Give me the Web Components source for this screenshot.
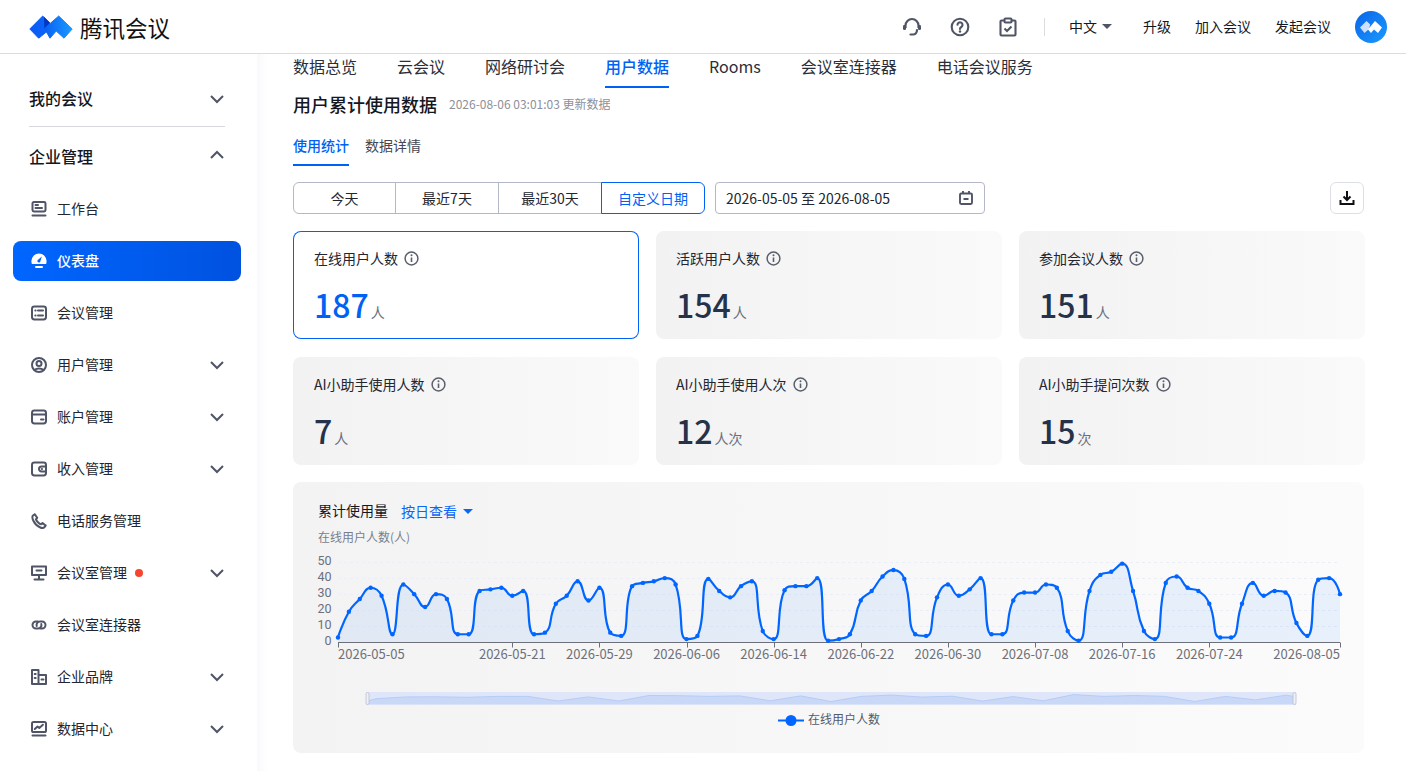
<!DOCTYPE html>
<html lang="zh-CN"><head><meta charset="utf-8"><title>腾讯会议</title>
<style>
html,body{margin:0;height:771px;overflow:hidden;background:#fff}
body{font-family:"Noto Sans CJK SC","Noto Sans",sans-serif;color:#15171f;font-size:14px}
app-shell{display:block}
</style></head><body>
<app-shell></app-shell>
<script>
const FONT='"Noto Sans CJK SC","Noto Sans",sans-serif';
const CH=`<svg width="16" height="16" viewBox="0 0 16 16" fill="none" stroke="#4f5566" stroke-width="2"><path d="M2 5l6 6 6-6"/></svg>`;
const S=(b,w=16)=>`<svg width="${w}" height="${w}" viewBox="0 0 16 16" fill="none" stroke="currentColor" stroke-width="2" stroke-linecap="round" stroke-linejoin="round">${b}</svg>`;
const ICONS={
desk:S(`<rect x="1.500" y="1" width="13" height="9.500" rx="1.400"/><path d="M4.500 4h2.500M4.500 7h6.500M1.500 14.500h13"/>`),
gauge:`<svg width="16" height="16" viewBox="0 0 16 16"><path fill="#fff" fill-rule="evenodd" d="M8 0.500a7.600 7.600 0 0 1 7.600 7.600c0 1-.2 2-.5 2.900H.9A7.600 7.600 0 0 1 .4 8.100 7.600 7.600 0 0 1 8 .5zM10.800 3.400L7.400 6.600a1.500 1.500 0 1 0 1.900 1.800z"/><rect fill="#fff" x="4" y="13" width="8" height="2" rx="1"/></svg>`,
list:S(`<rect x="1" y="1.500" width="14" height="13" rx="2.400"/><path d="M4.300 5.500h.3M7 5.500h5M4.300 10.500h.3M7 10.500h5"/>`),
user:S(`<circle cx="8" cy="8" r="7"/><circle cx="8" cy="6.400" r="2.500"/><path d="M3.800 12.700c1-1 2.400-1.300 4.200-1.300s3.200.3 4.200 1.300"/>`),
card:S(`<rect x="1" y="1.500" width="14" height="13" rx="2.400"/><path d="M1.500 5.500h13M10 10.500h2.500"/>`),
wallet:S(`<rect x="1" y="1.500" width="14" height="13" rx="2.400"/><path d="M15 5.500h-4.500a2.500 2.500 0 0 0 0 5H15"/><path d="M10.800 8h.2"/>`),
phone:S(`<path d="M3.800 1.200 2 2.500C1 3.400 1.300 5.500 2.500 8c1.300 2.600 4 5.400 6.800 6.500 1.700.7 3.200.6 4-.2l1.400-1.700-3.200-2.600-1.600 1.200C8.600 11.300 5.600 8.300 4.900 6.400l1.300-1.600z"/>`),
room:S(`<path d="M1 1.500h14v8.500H1zM8 10v3.500M3.500 14.500h9M5.500 5.500h5"/>`),
link:S(`<path d="M6.800 4.500H5a3.500 3.500 0 0 0 0 7h2a3.500 3.500 0 0 0 3.300-4.500"/><path d="M9.200 11.500H11a3.500 3.500 0 0 0 0-7H9a3.500 3.500 0 0 0-3.300 4.500"/>`),
brand:S(`<path d="M1 1h6.500v14H1zM7.500 6H15v9H7.500zM3.700 5h1M3.700 9h1M10.500 10.500h2"/>`),
data:S(`<rect x="1" y="1" width="14" height="10" rx="1.600"/><path d="M3.800 8l2.700-2.400 1.800 1.300 3.600-3.200M1.500 14.500h13"/>`)
};
function def(name,html,setup){customElements.define(name,class extends HTMLElement{constructor(){super();this.attachShadow({mode:'open'})}connectedCallback(){const h=typeof html==='function'?html(this):html;this.shadowRoot.innerHTML=h;setup&&setup(this)}})}

def('app-logo',`<style>:host{display:inline-flex;align-items:center;gap:7px}svg{display:block}span{font-size:22.500px;line-height:30px;color:#111;font-weight:400;white-space:nowrap}</style>
<svg width="44" height="24" viewBox="29 14 44 24"><defs><linearGradient id="a" x1="0" x2="1"><stop offset="0" stop-color="#0a5af0"/><stop offset="1" stop-color="#0c66ff"/></linearGradient><linearGradient id="b" x1="0" x2="1"><stop offset="0" stop-color="#0a60f2"/><stop offset="1" stop-color="#1a9aff"/></linearGradient></defs>
<g stroke-linejoin="round" stroke-width="1"><path fill="url(#a)" stroke="url(#a)" d="M29.800 28 42.700 15 50 22.200 47 30.500 38.700 37.200z"/><path fill="url(#b)" stroke="url(#b)" d="M44.500 27.500 58.700 15 72.200 28 64 37.200 56.200 30 50 37.200z"/></g>
<path fill="#0038c0" d="M44 15.700 50 21.800 44.300 27.200z"/></svg><span>腾讯会议</span>`);

def('app-avatar',`<style>:host{display:block;width:32px;height:32px}svg{display:block}</style><svg width="32" height="32" viewBox="0 0 32 32"><defs><linearGradient id="g" x1="0" y1="0" x2="1" y2="1"><stop offset="0" stop-color="#0a63e8"/><stop offset="1" stop-color="#1b9bff"/></linearGradient></defs><circle cx="16" cy="16" r="16" fill="url(#g)"/><path fill="#cfe0ff" d="M5 16.500 11.500 10 15.200 13.500 14 18 9.500 22z"/><path fill="#fff" d="M13 18.500 20 10 27 16.500 23 22 19 18.500 16 22z"/></svg>`);

def('app-header',()=>{const ic='#4f5566';return `<style>
:host{display:flex;align-items:center;height:53px;border-bottom:1px solid #dcdcdc;padding:0 19px 0 29px;background:#fff;box-sizing:content-box}
.r{margin-left:auto;display:flex;align-items:center}
.i{width:20px;height:20px;margin-right:28px;display:block}
.sep{width:1px;height:18px;background:#dcdcdc;margin:0 24px 0 0}
.t{font-size:14px;color:#15171f;white-space:nowrap;margin-bottom:2px}
.lang{display:flex;align-items:center;margin-right:31px}
.lang i{margin:2px 0 0 5px;border:5px solid transparent;border-top:5px solid #4f5566;border-bottom:0;width:0}
.t.m{margin-right:24px;width:56px}.t.n{margin-right:24px;width:28px}
</style><app-logo></app-logo><div class="r">
<svg class="i" viewBox="0 0 20 20" fill="none" stroke="${ic}" stroke-width="2.200"><path d="M3.500 11V8.500a6.500 6.500 0 0 1 13 0V11"/><rect x="1" y="8" width="3" height="5" rx="1.200" fill="${ic}" stroke="none"/><rect x="16" y="8" width="3" height="5" rx="1.200" fill="${ic}" stroke="none"/><path d="M15 13c0 3-2 4.500-4 4.500H8.500" stroke-linecap="round"/></svg>
<svg class="i" viewBox="0 0 20 20" fill="none" stroke="${ic}" stroke-width="2.100"><circle cx="10" cy="10" r="8.300"/><path d="M7.500 7.800a2.500 2.500 0 1 1 3.800 2.200c-.9.500-1.300 1-1.300 1.900" stroke-linecap="round"/><circle cx="10" cy="14.500" r="1.200" fill="${ic}" stroke="none"/></svg>
<svg class="i" viewBox="0 0 20 20" fill="none" stroke="${ic}" stroke-width="2.100" style="margin-right:26px"><path d="M6.500 3.500H3.500c-.6 0-1 .4-1 1v13c0 .6.400 1 1 1h13c.6 0 1-.4 1-1v-13c0-.6-.4-1-1-1h-3"/><rect x="6.500" y="1.500" width="7" height="4" rx="1"/><path d="M6.500 11.500l2.500 2.500 4.500-4.500"/></svg>
<span class="sep"></span>
<span class="t lang">中文<i></i></span><span class="t n">升级</span><span class="t m">加入会议</span><span class="t m">发起会议</span><app-avatar></app-avatar></div>`});

def('nav-group',el=>`<style>:host{display:flex;align-items:center;justify-content:space-between;height:40px;box-sizing:border-box;padding:0 16px 2px;font-size:16px;font-weight:500;color:#15171f}svg{display:block;margin-top:2px;${el.hasAttribute('open')?'transform:rotate(180deg);margin-top:-2px':''}}</style><slot></slot>${CH}`);

def('nav-item',el=>`<style>
:host{display:flex;align-items:center;height:40px;box-sizing:border-box;padding:0 16px 2px 18px;border-radius:8px;font-size:14px;color:#23262f}
:host([active]){background:linear-gradient(90deg,#0066ff,#0052e0);color:#fff;font-weight:500}
.ic{width:16px;height:16px;margin:2px 10px 0 0;color:#4f5566;display:block}.ic svg{display:block}
.dot{width:8px;height:8px;border-radius:50%;background:#f5452f;margin:2px 0 0 8px}
.ch{margin:2px 0 0 auto;display:block}.ch svg{display:block}
</style><span class="ic">${ICONS[el.getAttribute('icon')]}</span><slot></slot>${el.hasAttribute('dot')?'<i class="dot"></i>':''}${el.hasAttribute('more')?`<span class="ch">${CH}</span>`:''}`);

def('side-nav',`<style>:host{display:flex;flex-direction:column;width:257px;box-sizing:border-box;padding:25px 16px 0 13px;height:717px;overflow:hidden;flex:none;background:#fff}
hr{border:0;border-top:1px solid #d8d9dc;margin:7px 0 10px 16px;width:196px}
.list{display:flex;flex-direction:column;gap:12px;margin-top:12px}</style>
<nav-group>我的会议</nav-group><hr><nav-group open>企业管理</nav-group>
<div class="list"><nav-item icon="desk">工作台</nav-item><nav-item icon="gauge" active>仪表盘</nav-item><nav-item icon="list">会议管理</nav-item><nav-item icon="user" more>用户管理</nav-item><nav-item icon="card" more>账户管理</nav-item><nav-item icon="wallet" more>收入管理</nav-item><nav-item icon="phone">电话服务管理</nav-item><nav-item icon="room" more dot>会议室管理</nav-item><nav-item icon="link">会议室连接器</nav-item><nav-item icon="brand" more>企业品牌</nav-item><nav-item icon="data" more>数据中心</nav-item></div>`);

def('top-tabs',`<style>:host{display:flex;gap:40px;height:34px}
::slotted(a){font-size:16px;line-height:24px;height:32px;color:#2b2e38;white-space:nowrap}
::slotted(a.on){color:#0062f5;font-weight:500;border-bottom:2px solid #0062f5}</style><slot></slot>`);
def('sub-tabs',`<style>:host{display:flex;gap:16px;height:31px}
::slotted(a){font-size:14px;line-height:20px;height:29px;color:#444854;white-space:nowrap}
::slotted(a.on){color:#0062f5;font-weight:500;border-bottom:2px solid #0062f5}</style><slot></slot>`);

def('seg-group',`<style>:host{display:flex;width:412px;height:32px;box-sizing:border-box;font-size:14px}
::slotted(button){all:unset;box-sizing:border-box;width:104px;text-align:center;font:14px/30px ${FONT};color:#23262f;border:1px solid #b3b8c6;margin-left:-1px;background:#fff}
::slotted(button:first-child){margin-left:0;width:103px;border-radius:6px 0 0 6px}
::slotted(button:last-child){border-radius:0 6px 6px 0;color:#0062f5;border-color:#0062f5;position:relative}</style><slot></slot>`);

def('date-field',`<style>:host{display:flex;align-items:center;justify-content:space-between;width:270px;height:32px;box-sizing:border-box;border:1px solid #b3b8c6;border-radius:4px;padding:0 10px;font-size:14px;color:#23262f;margin-left:10px;background:#fff}svg{display:block}</style><slot></slot><svg width="16" height="16" viewBox="0 0 16 16" fill="none" stroke="#4f5566" stroke-width="1.900"><rect x="2" y="3.500" width="12" height="10.500" rx="1.200"/><path d="M5 1v3M11 1v3M5.500 9h5"/></svg>`);

def('icon-btn',`<style>:host{display:flex;align-items:center;justify-content:center;width:34px;height:32px;box-sizing:border-box;border:1px solid #dcdfe6;border-radius:6px;margin-left:auto;background:#fff}svg{display:block}</style><svg width="16" height="16" viewBox="0 0 16 16" fill="none" stroke="#0f1014" stroke-width="2"><path d="M8 1v8.500M4.500 6.500 8 10l3.500-3.500"/><path d="M1.500 10v4h13v-4"/></svg>`);

def('stat-card',el=>`<style>
:host{display:block;height:108px;box-sizing:border-box;padding:16px 20px 0 20px;border-radius:8px;background:linear-gradient(90deg,#f2f2f3,#fafafa)}
:host([first]){padding-left:21px}
:host([active]){background:#fff;box-shadow:inset 0 0 0 1px #0062f5}
.t{display:flex;align-items:center;height:22px;font-size:14px;color:#23262f}
svg{margin-left:6px;display:block}
.n{display:flex;align-items:baseline;margin-top:11px;height:48px;line-height:48px;font-size:32px;font-weight:500;color:#24324a}
:host([active]) .n{color:#0062f5}
.u{font-size:14px;font-weight:400;color:#6a6f7c;margin-left:2px}
</style><div class="t"><slot></slot><svg width="15" height="15" viewBox="0 0 15 15" fill="none" stroke="#5a5f6c" stroke-width="1.500"><circle cx="7.500" cy="7.500" r="6.400"/><path d="M7.500 6.500v4.500" stroke-width="1.600"/><circle cx="7.500" cy="4.300" r="1" fill="#5a5f6c" stroke="none"/></svg></div><div class="n">${el.getAttribute('num')}<span class="u">${el.getAttribute('unit')}</span></div>`);

const DATA=[3,19,27,34,29,5,36,30,22,30,27,5,5,32,33,34,29,32,5,6,24,29,38,26,34,6,4,35,37,38,40,36,2,4,39.5,32,28,35,38,7,2,32.5,35,35,40,1,2,5,26,32,41,45,39.5,5,4,28,36,29,33,40,5,5,26,31,31,36,34,7,1,32,42,44,49,32,7,2,37,41,34,32,24,3,3,24,37,29,32,31,12,4,39,40,30];
const X0=338,STEP=(1340-338)/92,Y0=642.3,YS=1.605;
function smooth(pts,s=.5){let d=`M${pts[0][0]} ${pts[0][1]}`;let cp0=[pts[0][0],pts[0][1]];const clamp=(v,a,b)=>Math.max(Math.min(v,Math.max(a,b)),Math.min(a,b));
for(let i=0;i<pts.length-1;i++){const [x,y]=pts[i+1];const [px,py]=pts[i];const nx=(pts[i+2]||pts[i+1])[0],ny=(pts[i+2]||pts[i+1])[1];let c1,nc0;
if(i+2>=pts.length){c1=[x,y];nc0=[x,y]}else{let vx=nx-px,vy=ny-py;const lp=Math.hypot(x-px,y-py)||1e-6,ln=Math.hypot(nx-x,ny-y)||1e-6;const r=ln/(ln+lp);let a=clamp(x+vx*s*r,x,nx),b=clamp(y+vy*s*r,y,ny);vx=a-x;vy=b-y;let c=clamp(x-vx*lp/ln,px,x),e=clamp(y-vy*lp/ln,py,y);vx=x-c;vy=y-e;a=x+vx*ln/lp;b=y+vy*ln/lp;c1=[c,e];nc0=[a,b]}
d+=`C${cp0[0].toFixed(2)} ${cp0[1].toFixed(2)} ${c1[0].toFixed(2)} ${c1[1].toFixed(2)} ${x.toFixed(2)} ${y.toFixed(2)}`;cp0=nc0}return d}

def('line-chart',()=>{
const pts=DATA.map((v,i)=>[X0+i*STEP,Y0-v*YS]);const line=smooth(pts);
const area=line+`L1340 ${Y0}L${X0} ${Y0}Z`;
const grid=[50,40,30,20,10].map(v=>`<path d="M${X0} ${(Y0-v*1.6).toFixed(0)}.5H1340" stroke="#eceef7" stroke-dasharray="3 3" fill="none"/>`).join('');
const yl=[0,10,20,30,40,50].map(v=>`<text x="331.500" y="${(Y0-v*1.6+3).toFixed(1)}" text-anchor="end" style='font:12.500px Roboto,sans-serif'>${v}</text>`).join('');
const tk=[['2026-05-05',0,'start'],['2026-05-21',16],['2026-05-29',24],['2026-06-06',32],['2026-06-14',40],['2026-06-22',48],['2026-06-30',56],['2026-07-08',64],['2026-07-16',72],['2026-07-24',80],['2026-08-05',92,'end']];
const ticks=tk.map(t=>{const x=X0+t[1]*STEP;return `<path d="M${x.toFixed(0)}.5 642.500v5" stroke="#6e7079"/><text x="${x.toFixed(1)}" y="658.500" text-anchor="${t[2]||'middle'}">${t[0]}</text>`}).join('');
const dots=pts.map(p=>`<circle cx="${p[0].toFixed(2)}" cy="${p[1].toFixed(2)}" r="2.200" fill="#0066ff"/>`).join('');
const sx=366,sw=930;const mini=[];const med=(a,b,c)=>[a,b,c].sort((x,y)=>x-y)[1];
for(let i=1;i<DATA.length-1;i+=3){mini.push([sx+i/92*sw,702-med(DATA[i-1],DATA[i],DATA[i+1])*.175])}
mini.unshift([sx,702-3*.175]);mini.push([sx+sw,702-30*.175]);
const ml=mini.map((p,i)=>(i?'L':'M')+p[0].toFixed(1)+' '+p[1].toFixed(1)).join('');
return `<style>:host{display:block}svg{display:block}text{font:13px ${FONT};fill:#6e7079}</style>
<svg width="1071" height="208" viewBox="293 545 1071 208">
${grid}<path d="${area}" fill="#0066ff" fill-opacity=".075"/><path d="M${X0} 642.500H1340" stroke="#6e7079"/>${ticks}${yl}<path d="${line}" fill="none" stroke="#0066ff" stroke-width="2.200"/>${dots}
<rect x="${sx}" y="692" width="${sw}" height="12.500" fill="#dfe6f9"/><path d="${ml}L${sx+sw} 704.500L${sx} 704.500Z" fill="#c9d8f6"/><path d="${ml}" fill="none" stroke="#b5ccf7"/>
<rect x="${sx}" y="692.500" width="3" height="12" rx="1.500" fill="#eef0f5" stroke="#b9bfd0" stroke-width=".8"/><rect x="${sx+sw-3}" y="692.500" width="3" height="12" rx="1.500" fill="#eef0f5" stroke="#b9bfd0" stroke-width=".8"/>
<path d="M778 720.500h26" stroke="#0066ff" stroke-width="2"/><circle cx="791" cy="720.500" r="5.500" fill="#0066ff"/><text x="808" y="723.500" style="fill:#555a66;font-size:12px">在线用户人数</text>
</svg>`});

def('usage-panel',`<style>:host{display:block;height:271px;border-radius:8px;background:linear-gradient(90deg,#f3f3f4,#fbfbfb);overflow:hidden}
.h{display:flex;align-items:center;height:22px;margin:17px 0 0 25px;font-size:14px;color:#15171f}
.m{color:#0a66f5;margin:2px 0 0 13px;display:flex;align-items:center}.m i{margin-left:6px;border:5px solid transparent;border-top:5px solid #0a66f5;border-bottom:0;width:0}
.y{margin:8px 0 0 25px;height:16px;font-size:12px;line-height:15px;color:#7a7e89}</style>
<div class="h">累计使用量<span class="m">按日查看<i></i></span></div><div class="y">在线用户人数(人)</div><line-chart></line-chart>`);

def('page-main',`<style>:host{display:block;flex:1;padding:0 42px 0 36px;background:linear-gradient(90deg,#f8f9fb,#fff 10px);box-sizing:border-box;min-width:0}
.hd{display:flex;align-items:center;height:32px;margin:0 0 15px}
h1{font-size:18px;line-height:32px;font-weight:500;margin:0;color:#15171f}
.ts{font-size:12px;color:#8d909a;margin:-2px 0 0 12px}
.bar{display:flex;align-items:center;height:32px;margin-top:16px}
.grid{display:grid;grid-template-columns:repeat(3,345.500px);column-gap:17.500px;row-gap:18px;margin-top:17px}
usage-panel{margin-top:17px}</style>
<top-tabs><slot name="tabs"></slot></top-tabs>
<div class="hd"><h1>用户累计使用数据</h1><span class="ts">2026-08-06 03:01:03 更新数据</span></div>
<sub-tabs><slot name="sub"></slot></sub-tabs>
<div class="bar"><seg-group><slot name="seg"></slot></seg-group><date-field>2026-05-05 至 2026-08-05</date-field><icon-btn></icon-btn></div>
<div class="grid"><stat-card first active num="187" unit="人">在线用户人数</stat-card><stat-card num="154" unit="人">活跃用户人数</stat-card><stat-card num="151" unit="人">参加会议人数</stat-card><stat-card first num="7" unit="人">AI小助手使用人数</stat-card><stat-card num="12" unit="人次">AI小助手使用人次</stat-card><stat-card num="15" unit="次">AI小助手提问次数</stat-card></div>
<usage-panel></usage-panel>`);
</script>
<script>
def('app-shell',`<style>:host{display:block}.b{display:flex;height:717px;overflow:hidden}</style><app-header></app-header><div class="b"><side-nav></side-nav><page-main>
<top-tabs slot="tabs"><a>数据总览</a><a>云会议</a><a>网络研讨会</a><a class="on">用户数据</a><a>Rooms</a><a>会议室连接器</a><a>电话会议服务</a></top-tabs>
<sub-tabs slot="sub"><a class="on">使用统计</a><a>数据详情</a></sub-tabs>
<seg-group slot="seg"><button>今天</button><button>最近7天</button><button>最近30天</button><button>自定义日期</button></seg-group>
</page-main></div>`);
</script>
</body></html>
